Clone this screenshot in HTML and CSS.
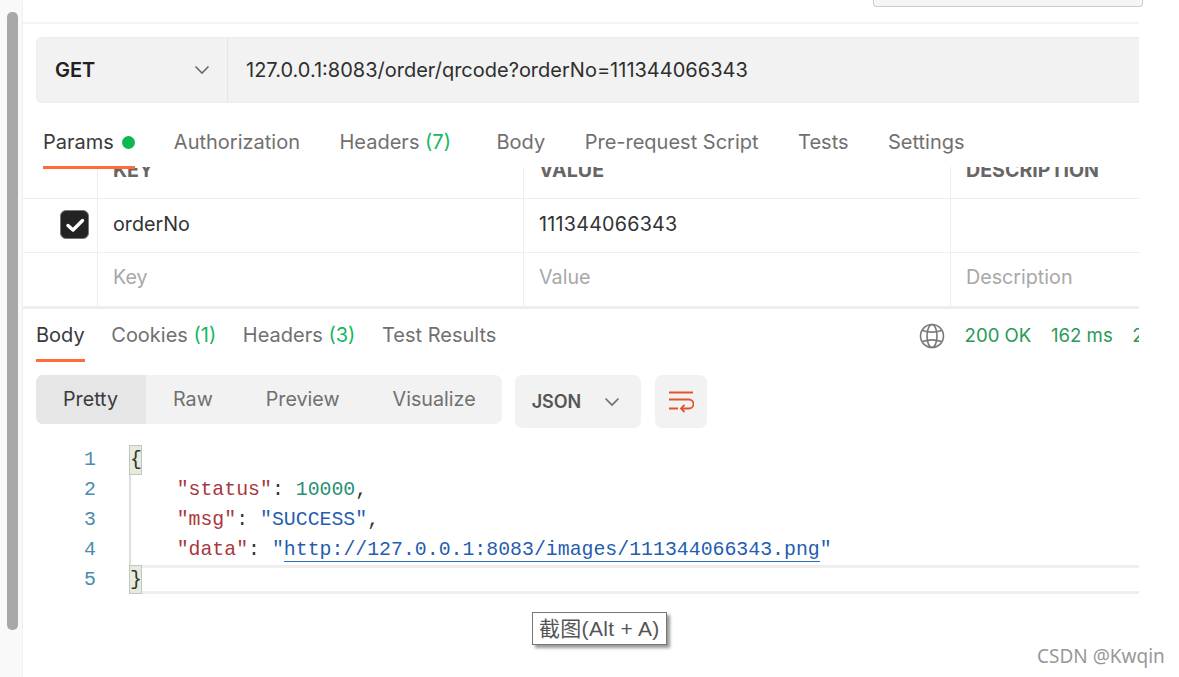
FILE: index.html
```html
<!DOCTYPE html>
<html lang="en">
<head>
<meta charset="utf-8">
<title>Postman request</title>
<link rel="stylesheet" href="styles.css">
</head>
<body>
<div class="page">
  <aside class="gutter"><div class="thumb"></div></aside>
  <main class="main">
    <div class="topbar"></div>
    <div class="urlbar">
      <div class="method"><span>GET</span>
        <svg class="chev" width="16" height="10" viewBox="0 0 16 10"><path d="M1.500 1.500 8 8l6.500-6.500" fill="none" stroke="#6b6b6b" stroke-width="1.600"/></svg>
      </div>
      <div class="url">127.0.0.1:8083/order/qrcode?orderNo=111344066343</div>
    </div>
    <nav class="tabs">
      <div class="tab active">Params<i class="dot"></i></div>
      <div class="tab">Authorization</div>
      <div class="tab tab-wide">Headers <b class="count">(7)</b></div>
      <div class="tab">Body</div>
      <div class="tab">Pre-request Script</div>
      <div class="tab">Tests</div>
      <div class="tab">Settings</div>
    </nav>
    <section class="table">
      <div class="row row-head">
        <div class="c c0"></div><div class="c c1"><span>KEY</span></div><div class="c c2"><span>VALUE</span></div><div class="c c3"><span>DESCRIPTION</span></div>
      </div>
      <div class="row row-body">
        <div class="c c0"><span class="check"><svg width="20" height="16" viewBox="0 0 20 16"><path d="M3 8.500 8 13 17.500 3.500" fill="none" stroke="#fff" stroke-width="3.400" stroke-linecap="round" stroke-linejoin="round"/></svg></span></div>
        <div class="c c1">orderNo</div><div class="c c2 digits">111344066343</div><div class="c c3"></div>
      </div>
      <div class="row row-last ph">
        <div class="c c0"></div><div class="c c1">Key</div><div class="c c2">Value</div><div class="c c3">Description</div>
      </div>
    </section>
    <nav class="restabs">
      <div class="restabs-left">
        <div class="rtab active">Body</div>
        <div class="rtab">Cookies <b class="count">(1)</b></div>
        <div class="rtab">Headers <b class="count">(3)</b></div>
        <div class="rtab">Test Results</div>
      </div>
      <div class="status">
        <svg width="26" height="26" viewBox="0 0 26 26" fill="none" stroke="#7a7a7a" stroke-width="1.600"><circle cx="13" cy="13" r="11.500"/><ellipse cx="13" cy="13" rx="5" ry="11.500"/><path d="M3.500 7.500c6 2 13 2 19 0M3.500 18.500c6-2 13-2 19 0"/></svg>
        <span class="ok">200 OK</span><span class="ok">162 ms</span><span class="ok">2</span>
      </div>
    </nav>
    <div class="toolbar">
      <div class="modes">
        <div class="mode on">Pretty</div><div class="mode">Raw</div><div class="mode">Preview</div><div class="mode">Visualize</div>
      </div>
      <div class="lang"><span>JSON</span>
        <svg width="16" height="10" viewBox="0 0 16 10"><path d="M1.500 1.500 8 8l6.500-6.500" fill="none" stroke="#6b6b6b" stroke-width="1.600"/></svg>
      </div>
      <div class="wrap">
        <svg width="26" height="24" viewBox="0 0 26 24" fill="none" stroke="#e0542a" stroke-width="1.800"><path d="M1 2.500h24M1 9.500h20a4.500 4.500 0 0 1 0 9h-8"/><path d="M16.500 15 13 18.500l3.500 3.500M1 18.500h9"/></svg>
      </div>
    </div>
    <div class="code">
      <div class="line"><span class="num">1</span><span class="brace">{</span></div>
      <div class="line"><span class="num">2</span><span class="txt">    <span class="k">"status"</span>: <span class="n">10000</span>,</span></div>
      <div class="line"><span class="num">3</span><span class="txt">    <span class="k">"msg"</span>: <span class="s">"SUCCESS"</span>,</span></div>
      <div class="line"><span class="num">4</span><span class="txt">    <span class="k">"data"</span>: <span class="s">"<a class="link">http://127.0.0.1:8083/images/111344066343.png</a>"</span></span></div>
      <div class="line current"><span class="num">5</span><span class="brace">}</span></div>
    </div>
  </main>
</div>
<div class="widget"></div>
<div class="tooltip">截图(Alt + A)</div>
<div class="mark">CSDN @Kwqin</div>
</body>
</html>
```
FILE: styles.css
```css
* { box-sizing: border-box; }
html, body { margin: 0; height: 100%; background: #fff; overflow: hidden; }
body { font-family: Inter, "Noto Sans", sans-serif; font-size: 20px; color: #212121; position: relative; }
.page { display: flex; height: 677px; }
.gutter { width: 23px; flex: none; background: #f9f9f9; border-right: 1px solid #f0f0f0; position: relative; }
.thumb { position: absolute; left: 7px; top: 12px; width: 11px; height: 618px; background: #a8a8a8; border-radius: 5px; }
.main { width: 1116px; flex: none; overflow: hidden; }
.topbar { height: 24px; border-bottom: 2px solid #f4f4f4; }
.urlbar { display: flex; height: 66px; margin: 13px 0 0 13px; background: #f2f2f2; border: 1px solid #ececec; border-right: 0; border-radius: 6px 0 0 6px; }
.method { width: 191px; flex: none; display: flex; align-items: center; justify-content: space-between; padding: 0 17px 0 18px; border-right: 1px solid #e6e6e6; font-weight: 600; }
.url { padding-left: 18px; align-self: center; color: #2e2e2e; white-space: nowrap; }
.tabs { display: flex; gap: 39.500px; height: 64px; padding: 26px 0 0 20px; align-items: flex-start; color: #707070; position: relative; z-index: 1; }
.tab { position: relative; white-space: nowrap; line-height: 26px; }
.tab-wide { margin-right: 6px; }
.tab.active { color: #3a3a3a; display: flex; align-items: center; margin-right: -0.500px; }
.tab.active::after { content: ""; position: absolute; left: 0; right: 0; top: 37px; height: 3px; background: #ff6c37; }
.dot { width: 13px; height: 13px; margin-left: 8px; border-radius: 50%; background: #0cb84f; }
.count { font-weight: 400; color: #15b860; }
.table { color: #333; font-size: 19.700px; }
.row { display: flex; height: 54px; border-bottom: 1px solid #eee; }
.row-body .c1, .row-body .c2 { padding-bottom: 4px; }
.row-body .c0 { padding-bottom: 2px; }
.digits { letter-spacing: 0.250px; }
.row-head { height: 32px; overflow: hidden; font-weight: 700; font-size: 19.600px; color: #666; }
.row-head .c { align-items: flex-start; }
.row-head span { display: block; line-height: 20px; margin-top: -7px; }
.row-last { height: 56px; border-bottom: 3px solid #eee; }
.row-last .c { padding-bottom: 6px; }
.ph { color: #a8a8a8; }
.c { display: flex; align-items: center; padding-left: 15px; white-space: nowrap; border-right: 1px solid #eee; }
.c0 { width: 75px; flex: none; padding: 0 8px 0 0; justify-content: flex-end; }
.c1 { width: 426px; flex: none; }
.c2 { width: 427px; flex: none; }
.c3 { flex: 1; border-right: 0; }
.check { width: 29px; height: 29px; display: flex; align-items: center; justify-content: center; background: #232323; border: 1px solid #777; border-radius: 6px; }
.restabs { display: flex; height: 66px; padding-left: 13px; color: #707070; white-space: nowrap; }
.restabs-left { flex: 0 0 883px; display: flex; gap: 26.600px; }
.rtab { position: relative; height: 53px; padding-top: 13px; line-height: 26px; }
.rtab.active { color: #3a3a3a; border-bottom: 3px solid #ff6c37; }
.status { display: flex; flex: none; gap: 19.600px; height: 53px; align-items: center; font-size: 18.600px; }
.status .ok { line-height: 24px; margin-bottom: 2px; color: #2a9a56; }
.toolbar { display: flex; align-items: flex-start; margin-left: 13px; gap: 13px; }
.modes { display: flex; height: 49px; background: #f2f2f2; border-radius: 7px; color: #707070; overflow: hidden; font-size: 19.700px; }
.mode { display: flex; align-items: center; padding: 0 27px 2px; }
.mode.on { padding-right: 28px; background: #e6e6e6; color: #3a3a3a; }
.mode:nth-child(2) { padding-right: 26px; }
.mode:last-child { padding-right: 26px; padding-left: 26px; }
.lang { display: flex; align-items: center; justify-content: space-between; width: 126px; height: 53px; padding: 0 21px 0 17px; background: #f2f2f2; border-radius: 7px; font-size: 18px; font-weight: 600; color: #555; }
.wrap { width: 52px; height: 53px; display: flex; align-items: center; justify-content: center; background: #f2f2f2; border-radius: 7px; margin-left: 1px; }
.code { margin-top: 17px; font-family: "Liberation Mono", "DejaVu Sans Mono", monospace; font-size: 19.850px; color: #333; }
.line { display: flex; height: 30px; line-height: 30px; white-space: pre; }
.num { width: 73px; flex: none; text-align: right; color: #4a8cae; margin-right: 33px; }
.brace { width: 13px; flex: none; text-align: center; background: #e4eddc; border: 1px solid #c4c4c4; line-height: 28px; }
.txt { display: block; width: 100%; box-shadow: inset 2px 0 0 #dedede; }
.current { height: 29px; background: linear-gradient(#eee, #eee) 0 0 / 100% 3px no-repeat, linear-gradient(#eee, #eee) 0 100% / 100% 3px no-repeat; }
.current .num { background: #fff; margin-right: 0; padding-right: 33px; width: 106px; }
.k { color: #a8383e; }
.n { color: #2a8f72; }
.s { color: #1f5eb0; }
.link { border-bottom: 1.500px solid #2f6fc0; }
.widget { position: absolute; left: 873px; top: -6px; width: 270px; height: 13px; background: #f5f5f5; border: 1px solid #c8cccc; border-radius: 3px; }
.tooltip { position: absolute; left: 532px; top: 612px; height: 33px; padding: 0 6px; line-height: 31px; font-family: "Liberation Sans", "Noto Sans CJK SC", sans-serif; font-size: 21px; letter-spacing: 0.300px; color: #555; background: #fff; border: 1px solid #777; box-shadow: 3px 3px 3px #999; white-space: nowrap; }
.mark { position: absolute; left: 1037px; top: 644px; font-family: "Noto Sans", sans-serif; font-size: 19px; line-height: 24px; color: #989898; white-space: nowrap; }
```
